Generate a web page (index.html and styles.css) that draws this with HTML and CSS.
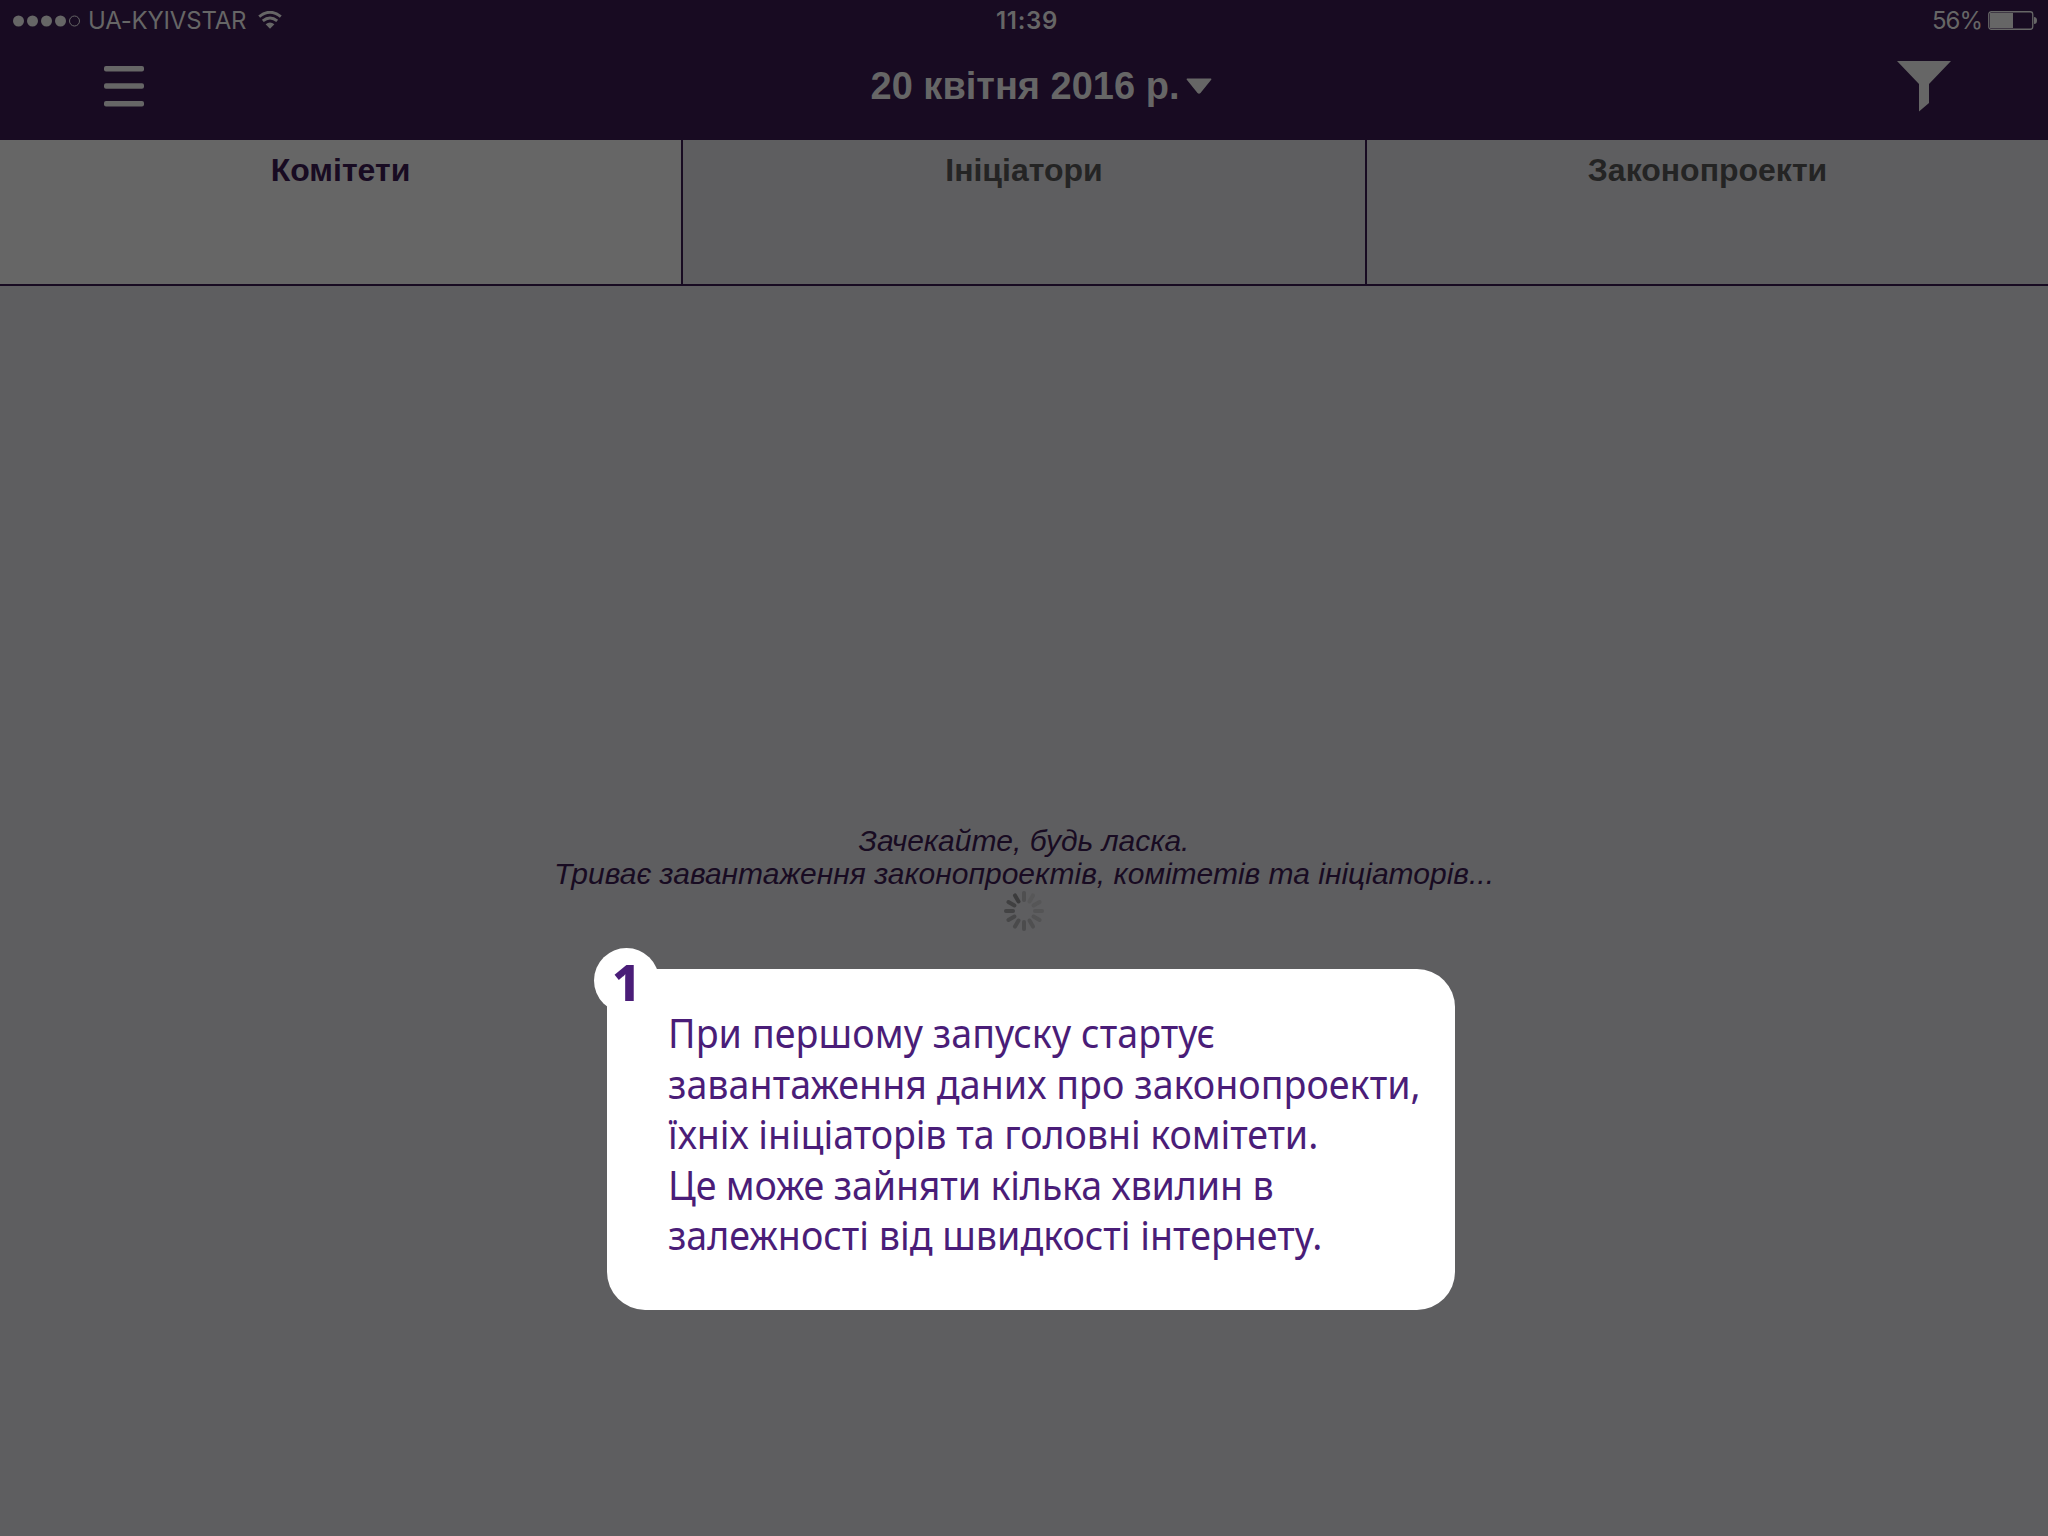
FILE: index.html
```html
<!DOCTYPE html>
<html lang="uk">
<head>
<meta charset="utf-8">
<title>Законопроекти</title>
<link rel="stylesheet" href="styles.css">
</head>
<body>
<div class="app">
  <header class="top">
    <div class="status">
      <div class="carrier">
        <svg class="signal" width="68" height="12" viewBox="0 0 68 12"><circle cx="5.5" cy="6" r="5.5"/><circle cx="19.5" cy="6" r="5.5"/><circle cx="33.5" cy="6" r="5.5"/><circle cx="47.5" cy="6" r="5.5"/><circle cx="61.5" cy="6" r="5" class="ring"/></svg>
        <span class="carrier-name">UA-KYIVSTAR</span>
        <svg class="wifi" width="24" height="18" viewBox="0 0 24 18"><path class="arc" d="M1.2 5.6Q12-3 22.8 5.6M4.8 9.9Q12 4.1 19.2 9.9"/><path d="M7.6 13.2Q12 9.6 16.4 13.2L12 17.8Z"/></svg>
      </div>
      <span class="clock">11:39</span>
      <div class="power">
        <span class="percent">56%</span>
        <svg class="battery" width="50" height="20" viewBox="0 0 50 20"><rect class="shell" x=".75" y=".75" width="44" height="17.5" rx="2.5"/><rect x="2" y="2" width="23" height="15"/><path d="M46 6Q49 6 49 9.500T46 13Z"/></svg>
      </div>
    </div>
    <div class="nav">
      <svg class="menu" width="40" height="41" viewBox="0 0 40 41"><rect width="40" height="5.500" rx="2"/><rect y="17.300" width="40" height="5.500" rx="2"/><rect y="35" width="40" height="5.500" rx="2"/></svg>
      <div class="date"><span>20 квітня 2016 р.</span><svg class="caret" width="26" height="17" viewBox="0 0 26 17"><path d="M1 .5H25Q26 1 25 2L14.500 15Q13 16.500 11.500 15L1 2Q0 1 1 .5Z"/></svg></div>
      <svg class="filter" width="54" height="51" viewBox="0 0 54 51"><path d="M0 0H54L32 23V42L22 50.500V23Z"/></svg>
    </div>
  </header>
  <nav class="tabs">
    <div class="tab active">Комітети</div>
    <div class="tab">Ініціатори</div>
    <div class="tab">Законопроекти</div>
  </nav>
  <main class="content">
    <p class="wait">Зачекайте, будь ласка.</p>
    <p class="wait">Триває завантаження законопроектів, комітетів та ініціаторів...</p>
    <svg class="spinner" width="40" height="40" viewBox="-20 -20 40 40">
      <path stroke="#4f4f50" d="M0-11V-18"/>
      <path stroke="#575758" d="M0-11V-18" transform="rotate(30)"/>
      <path stroke="#565657" d="M0-11V-18" transform="rotate(60)"/>
      <path stroke="#545455" d="M0-11V-18" transform="rotate(90)"/>
      <path stroke="#525253" d="M0-11V-18" transform="rotate(120)"/>
      <path stroke="#4f4f50" d="M0-11V-18" transform="rotate(150)"/>
      <path stroke="#4c4c4d" d="M0-11V-18" transform="rotate(180)"/>
      <path stroke="#4a4a4b" d="M0-11V-18" transform="rotate(210)"/>
      <path stroke="#474748" d="M0-11V-18" transform="rotate(240)"/>
      <path stroke="#434344" d="M0-11V-18" transform="rotate(270)"/>
      <path stroke="#404041" d="M0-11V-18" transform="rotate(300)"/>
      <path stroke="#3b3b3c" d="M0-11V-18" transform="rotate(330)"/>
    </svg>
  </main>
  <aside class="tip">
    <span class="badge">1</span>
    <p class="tip-line line-1">При першому запуску стартує</p>
    <p class="tip-line line-2">завантаження даних про законопроекти,</p>
    <p class="tip-line line-3">їхніх ініціаторів та головні комітети.</p>
    <p class="tip-line line-4">Це може зайняти кілька хвилин в</p>
    <p class="tip-line">залежності від швидкості інтернету.</p>
  </aside>
</div>
</body>
</html>
```
FILE: styles.css
```css
* { box-sizing: border-box; }
body { margin: 0; font-family: "Liberation Sans", Arial, sans-serif; }
p { margin: 0; }
svg { display: block; fill: #666; flex: none; }
.app { position: relative; width: 2048px; height: 1536px; display: flex; flex-direction: column; background: #5e5e60; overflow: hidden; }

.top { height: 140px; background: #180b22; color: #666; }
.status { height: 42px; display: grid; grid-template-columns: 1fr auto 1fr; align-items: center; padding: 0 10px 0 13px; font: 24px/40px Inter, sans-serif; }
.carrier, .power { display: flex; align-items: center; }
.power { justify-content: flex-end; }
.signal .ring { fill: none; stroke: #666; stroke-width: 1; }
.carrier-name { margin-left: 7px; letter-spacing: -.2px; }
.wifi { margin: -3px 0 0 12px; }
.wifi .arc { fill: none; stroke: #666; stroke-width: 3; }
.clock { font-weight: 600; letter-spacing: .7px; padding-left: 3px; }
.percent { margin-right: 6px; letter-spacing: -1px; }
.battery .shell { fill: none; stroke: #666; stroke-width: 1.3; }

.nav { height: 98px; display: grid; grid-template-columns: 1fr auto 1fr; align-items: start; padding: 0 97px 0 104px; }
.menu { margin-top: 24px; }
.date { display: flex; font-size: 38px; line-height: 44px; font-weight: bold; padding: 22px 0 0 28px; }
.caret { margin: 14px 0 0 7px; }
.filter { margin-top: 19px; justify-self: end; }

.tabs { height: 146px; display: grid; grid-template-columns: 683px 684px 681px; border-bottom: 2px solid #180b22; }
.tab { border-right: 2px solid #180b22; padding-top: 12px; text-align: center; font-size: 32px; line-height: 36px; font-weight: bold; color: #242424; }
.tab:last-child { border-right: 0; }
.tab.active { background: #666; color: #180b22; }

.content { flex: 1; display: flex; flex-direction: column; align-items: center; padding-top: 538px; }
.wait { font-size: 30px; line-height: 33px; font-style: italic; color: #180b22; white-space: nowrap; }
.spinner { margin-top: 1px; stroke-width: 4; stroke-linecap: round; }

.tip { position: absolute; left: 606.5px; top: 969px; width: 848.5px; height: 341px; border-radius: 38px; background: #fff; padding: 39px 0 0 61px; color: #4a1d78; font-family: "Noto Sans", "Open Sans", sans-serif; font-size: 40px; }
.tip-line { width: 800px; line-height: 50.6px; white-space: nowrap; transform: scaleX(.94); transform-origin: left; }
.line-1 { letter-spacing: .1px; }
.line-2 { letter-spacing: .05px; }
.line-3 { letter-spacing: -.07px; }
.line-4 { letter-spacing: -.17px; }
.badge { position: absolute; left: -12.5px; top: -21px; width: 65px; height: 65px; border-radius: 50%; background: #fff; font-size: 50px; line-height: 69px; font-weight: 800; text-align: center; }
```
